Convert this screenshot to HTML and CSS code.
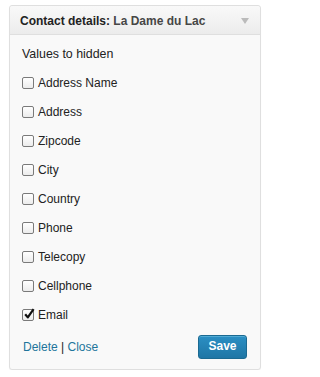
FILE: index.html
```html
<!DOCTYPE html>
<html>
<head>
<meta charset="utf-8">
<link rel="stylesheet" href="styles.css">
</head>
<body>
<div class="widget">
  <div class="widget-top">
    <div class="title"><span class="label">Contact details:</span> <span class="name">La Dame du Lac</span></div>
    <span class="arrow"></span>
  </div>
  <div class="widget-inside">
    <p class="intro">Values to hidden</p>
    <ul class="options">
      <li><span class="cb"></span>Address Name</li>
      <li><span class="cb"></span>Address</li>
      <li><span class="cb"></span>Zipcode</li>
      <li><span class="cb"></span>City</li>
      <li><span class="cb"></span>Country</li>
      <li><span class="cb"></span>Phone</li>
      <li><span class="cb"></span>Telecopy</li>
      <li><span class="cb"></span>Cellphone</li>
      <li><span class="cb checked"><svg viewBox="0 0 12 12" width="12" height="12"><path d="M2.2 6.2 L4.8 9.4 L10.6 1.2" fill="none" stroke="#111" stroke-width="2.2" stroke-linejoin="round"/></svg></span>Email</li>
    </ul>
    <div class="controls">
      <div class="links"><a href="#">Delete</a> | <a href="#">Close</a></div>
      <button class="save">Save</button>
    </div>
  </div>
</div>
</body>
</html>
```
FILE: styles.css
```css
html, body {
  margin: 0;
  padding: 0;
  background: #fff;
}
body {
  font-family: "Liberation Sans", Arial, sans-serif;
  font-size: 12.4px;
  color: #333;
  padding: 5px 8px 0 9px;
}
.widget {
  width: 250px;
  border: 1px solid #dfdfdf;
  border-radius: 3px;
  background: #f9f9f9;
  box-shadow: 0 1px 1px rgba(0,0,0,0.04);
}
.widget-top {
  height: 28px;
  display: flex;
  align-items: center;
  justify-content: space-between;
  padding: 0 10px 0 10px;
  background: linear-gradient(#f9f9f9, #ececec);
  border-bottom: 1px solid #dfdfdf;
  border-radius: 3px 3px 0 0;
}
.title {
  font-weight: bold;
  font-size: 12px;
  color: #222;
  padding-top: 1px;
}
.title .name {
  color: #464646;
}
.arrow {
  width: 0;
  height: 0;
  border-left: 4px solid transparent;
  border-right: 4px solid transparent;
  border-top: 6px solid #bbb;
  margin-top: 2px;
  margin-right: 1px;
}
.widget-inside {
  padding: 11px 12px 10px 12px;
}
.intro {
  margin: 0 0 6px 0;
  line-height: 16px;
  color: #222;
}
.options {
  list-style: none;
  margin: 0;
  padding: 0;
}
.options li {
  display: flex;
  align-items: center;
  height: 29px;
  color: #222;
  font-size: 12px;
}
.cb {
  width: 10px;
  height: 10px;
  border: 1px solid #7a7a7a;
  border-radius: 2px;
  background: linear-gradient(#fff, #ececec);
  margin-right: 4px;
  position: relative;
  flex: none;
}
.cb.checked svg {
  position: absolute;
  left: 0;
  top: -2px;
}
.controls {
  display: flex;
  justify-content: space-between;
  align-items: center;
  margin-top: 6px;
}
.links {
  color: #222;
  padding-left: 1px;
  font-size: 12px;
}
.links a {
  color: #21759b;
  text-decoration: none;
}
.save {
  width: 49px;
  height: 24px;
  border: 1px solid #1b6a92;
  border-radius: 3px;
  background: linear-gradient(#2b8fc4, #1f76a5);
  color: #fff;
  font-family: "Liberation Sans", Arial, sans-serif;
  font-weight: bold;
  font-size: 12px;
  padding: 0 0 2px 0;
  margin-right: 1px;
  box-shadow: inset 0 1px 0 rgba(120,200,230,0.5);
}
```
